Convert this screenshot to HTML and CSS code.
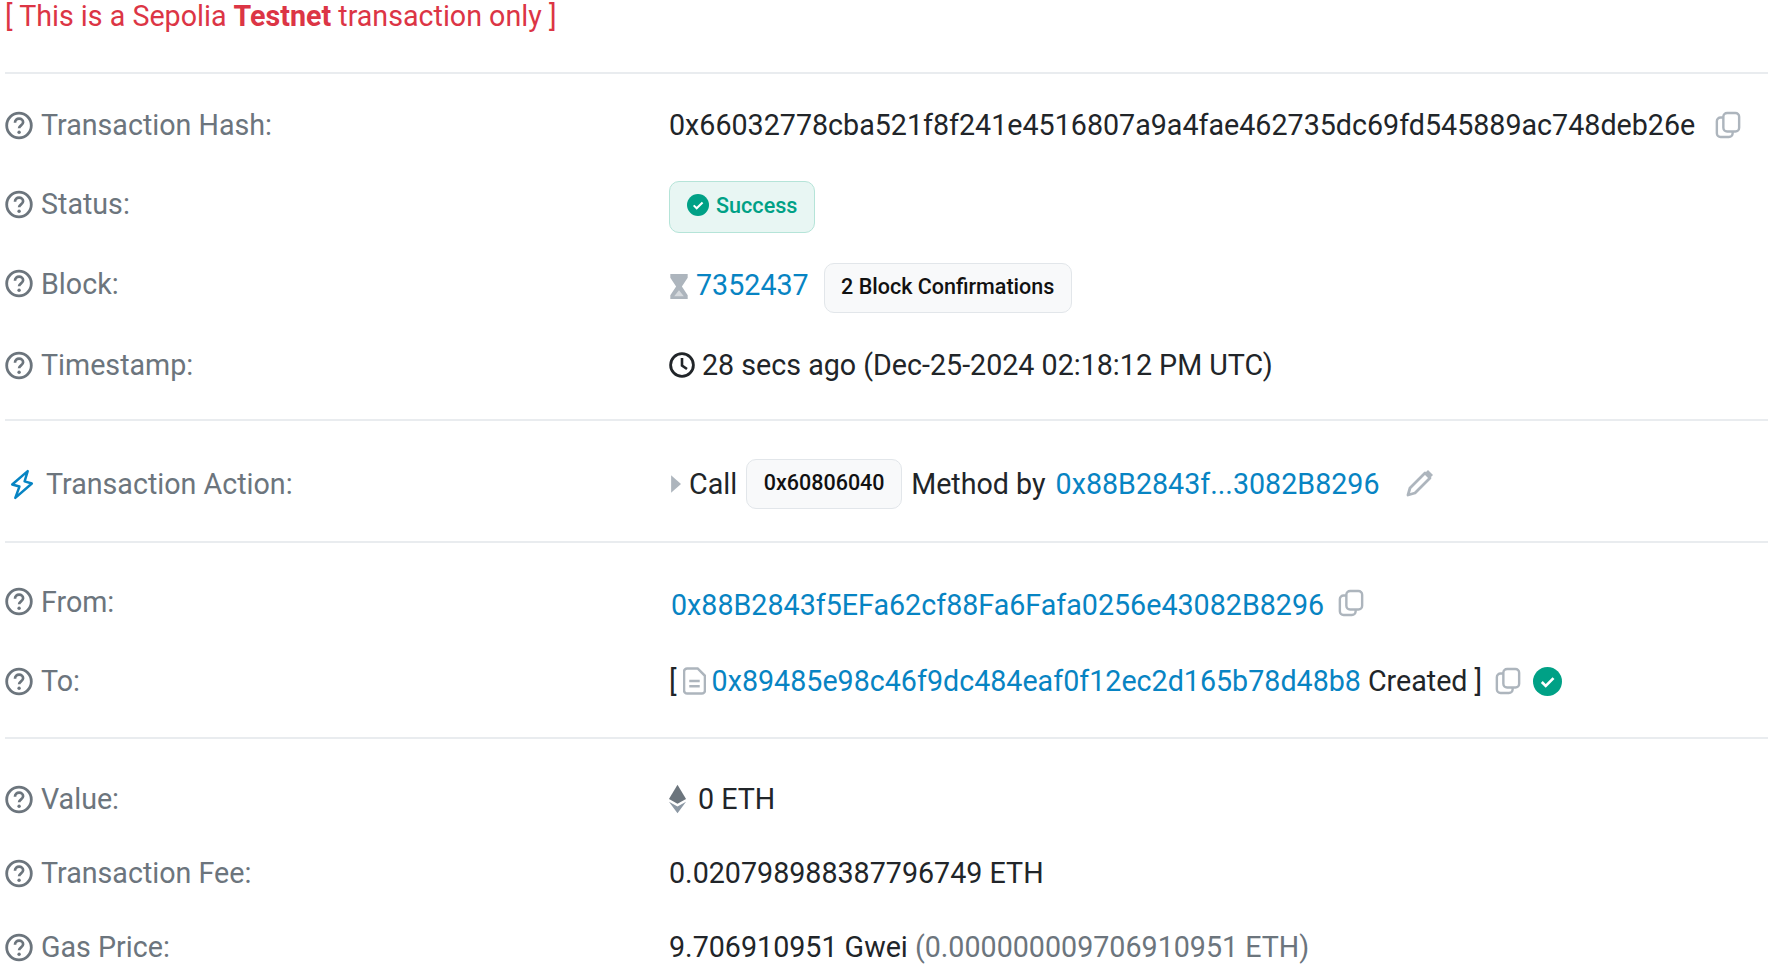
FILE: index.html
```html
<!DOCTYPE html>
<html lang="en">
<head>
<meta charset="utf-8">
<title>Sepolia Testnet transaction</title>
<link rel="stylesheet" href="styles.css">
</head>
<body>
<svg class="defs" width="0" height="0" aria-hidden="true">
  <symbol id="q" viewBox="0 0 28 28"><circle cx="14" cy="14" r="12.3" fill="none" stroke="currentColor" stroke-width="2.800"/><path d="M10 11.2c0-2.400 1.800-4 4.100-4s4 1.500 4 3.600c0 3.100-4 3.100-4 6" fill="none" stroke="currentColor" stroke-width="2.700"/><circle cx="14.100" cy="20.800" r="1.700" fill="currentColor"/></symbol>
  <symbol id="copy" viewBox="0 0 28 30"><rect x="9" y="2" width="17" height="20" rx="4" fill="none" stroke="currentColor" stroke-width="2.600"/><path d="M9 7H6a4 4 0 0 0-4 4v13a4 4 0 0 0 4 4h9a4 4 0 0 0 4-4v-2" fill="none" stroke="currentColor" stroke-width="2.600"/></symbol>
  <symbol id="check" viewBox="0 0 28 28"><circle cx="14" cy="14" r="14" fill="currentColor"/><path d="M8.500 14.500l3.800 3.700 7.500-7.500" fill="none" stroke="#fff" stroke-width="2.600"/></symbol>
</svg>

<main class="page">
  <p class="notice">[ This is a Sepolia <strong>Testnet</strong> transaction only ]</p>

  <section class="group group-a">
    <div class="row">
      <div class="label"><svg class="q"><use href="#q"/></svg>Transaction Hash:</div>
      <div class="value">0x66032778cba521f8f241e4516807a9a4fae462735dc69fd545889ac748deb26e<svg class="copy copy-hash"><use href="#copy"/></svg></div>
    </div>
    <div class="row">
      <div class="label label-status"><svg class="q"><use href="#q"/></svg>Status:</div>
      <div class="value"><span class="success"><svg class="check-sm"><use href="#check"/></svg>Success</span></div>
    </div>
    <div class="row">
      <div class="label label-up"><svg class="q"><use href="#q"/></svg>Block:</div>
      <div class="value">
        <svg class="glass" viewBox="0 0 20 28"><path d="M1 1h18v4l-6 9 6 9v4H1v-4l6-9-6-9z" fill="#adb5bd"/><path d="M5 24l5-6 5 6z" fill="#fff" opacity=".5"/></svg>
        <a class="link block-no">7352437</a>
        <span class="pill pill-confirm">2 Block Confirmations</span>
      </div>
    </div>
    <div class="row">
      <div class="label"><svg class="q"><use href="#q"/></svg>Timestamp:</div>
      <div class="value">
        <svg class="clock" viewBox="0 0 26 26"><circle cx="13" cy="13" r="11.400" fill="none" stroke="#212529" stroke-width="2.800"/><path d="M13 6v7.500l5 3.500" fill="none" stroke="#212529" stroke-width="2.600"/></svg>
        <span>28 secs ago (Dec-25-2024 02:18:12 PM UTC)</span>
      </div>
    </div>
  </section>

  <section class="group group-b">
    <div class="row">
      <div class="label label-action"><svg class="bolt" viewBox="0 0 24 30"><path d="M18 2L3 15l7 2-4 11 16-14-7-2z" fill="none" stroke="#0784c3" stroke-width="2.400" stroke-linejoin="round"/></svg>Transaction Action:</div>
      <div class="value">
        <svg class="caret" viewBox="0 0 10 16"><path d="M1 0l9 8-9 8z" fill="#adb5bd"/></svg>
        <span class="call">Call</span>
        <span class="pill pill-method">0x60806040</span>
        <span class="method">Method by</span>
        <a class="link">0x88B2843f...3082B8296</a>
        <svg class="pencil" viewBox="0 0 30 30"><path d="M3 27l2-7L20 5l5 5-15 15z" fill="none" stroke="#adb5bd" stroke-width="2.800" stroke-linejoin="round"/><path d="M20 5l3-3 5 5-3 3z" fill="#adb5bd"/></svg>
      </div>
    </div>
  </section>

  <section class="group group-c">
    <div class="row row-78">
      <div class="label label-up"><svg class="q"><use href="#q"/></svg>From:</div>
      <div class="value"><a class="link from">0x88B2843f5EFa62cf88Fa6Fafa0256e43082B8296</a><svg class="copy copy-from"><use href="#copy"/></svg></div>
    </div>
    <div class="row row-78">
      <div class="label"><svg class="q"><use href="#q"/></svg>To:</div>
      <div class="value">
        <span>[</span>
        <svg class="doc" viewBox="0 0 22 26"><path d="M4 1h10l7 7v14a3 3 0 0 1-3 3H4a3 3 0 0 1-3-3V4a3 3 0 0 1 3-3z" fill="none" stroke="#adb5bd" stroke-width="2.400"/><path d="M6 13h10M6 18h10" stroke="#adb5bd" stroke-width="2.200"/></svg>
        <a class="link to">0x89485e98c46f9dc484eaf0f12ec2d165b78d48b8</a>
        <span class="created">Created ]</span>
        <svg class="copy copy-to"><use href="#copy"/></svg>
        <svg class="check-lg"><use href="#check"/></svg>
      </div>
    </div>
  </section>

  <section class="group group-d">
    <div class="row row-74">
      <div class="label"><svg class="q"><use href="#q"/></svg>Value:</div>
      <div class="value">
        <svg class="eth" viewBox="0 0 20 30"><path d="M10 0L1 15l9 5 9-5z" fill="#6c757d"/><path d="M1 18l9 12 9-12-9 5z" fill="#8c98a4"/></svg>
        <span>0 ETH</span>
      </div>
    </div>
    <div class="row row-74">
      <div class="label"><svg class="q"><use href="#q"/></svg>Transaction Fee:</div>
      <div class="value">0.020798988387796749 ETH</div>
    </div>
    <div class="row row-74">
      <div class="label"><svg class="q"><use href="#q"/></svg>Gas Price:</div>
      <div class="value">9.706910951 Gwei <span class="muted">(0.000000009706910951 ETH)</span></div>
    </div>
  </section>
</main>
</body>
</html>
```

FILE: styles.css
```css
* { box-sizing: border-box; }
html, body { margin: 0; height: 969px; overflow: hidden; background: #fff; }
body { font-family: Roboto, "Liberation Sans", sans-serif; font-size: 28.65px; color: #212529; }
.defs { display: block; height: 0; }
.page { padding: 0 2px 0 5px; }
.notice { margin: 0; height: 72px; padding-top: 0; line-height: 33px; color: #dc3545; white-space: nowrap; }
.notice strong { font-weight: 700; }
.group { border-top: 2px solid #e9ecef; }
.group-a { padding: 11px 0 14px; }
.group-b { padding: 23px 0 17px; }
.group-c { padding: 21px 0 17px; }
.group-d { padding: 23px 0 0; }
.row { display: flex; align-items: center; height: 80px; }
.row-78 { height: 78px; }
.row-74 { height: 74px; }
.label { flex: 0 0 664px; display: flex; align-items: center; color: #6c757d; white-space: nowrap; }
.label-up { padding-bottom: 3px; }
.label-status { padding-bottom: 2px; }
.value { display: flex; align-items: center; white-space: pre; }
.q { width: 28px; height: 29px; margin-right: 8px; color: #6c757d; flex: none; }
.label-action { padding-left: 4px; }
.bolt { width: 25px; height: 31px; margin-right: 12px; flex: none; }
.link { color: #0784c3; }
.muted { color: #6c757d; }
.copy { width: 26px; height: 30px; color: #adb5bd; flex: none; }
.copy-hash { margin-left: 20px; }
.copy-from { margin-left: 14px; }
.copy-to { margin-left: 13px; }
.success { display: inline-flex; align-items: center; width: 146px; height: 52px; margin-top: 4px; padding: 0 0 3px 17px; border: 1.500px solid #b5e4d8; border-radius: 10px; background: #e8f6f3; color: #00a186; font-size: 21.6px; font-weight: 500; }
.check-sm { width: 22px; height: 22px; margin: -2px 7px 0 0; color: #00a186; }
.check-lg { width: 29px; height: 29px; margin-left: 12px; color: #00a186; }
.glass { width: 20px; height: 27px; margin-top: 2px; }
.block-no { margin-left: 7px; }
.pill { display: inline-flex; align-items: center; justify-content: center; height: 50px; border: 1.500px solid #e2e6ea; border-radius: 10px; background: #f8f9fa; font-size: 21.5px; font-weight: 500; color: #111; }
.pill-confirm { width: 248px; margin-left: 15px; margin-top: 6px; padding-bottom: 3px; }
.pill-method { width: 156px; margin: 0 9px 0 9px; padding-bottom: 3px; }
.clock { width: 26px; height: 26px; margin-right: 7px; }
.caret { width: 11px; height: 18px; margin-right: 8px; margin-left: 1px; }
.method { margin-right: 10px; }
.pencil { width: 30px; height: 30px; margin-left: 25px; margin-top: -2px; }
.from { margin: 3px 0 0 2px; }
.doc { width: 23px; height: 28px; margin: 0 6px 0 6px; }
.created { margin-left: 7px; }
.eth { width: 19px; height: 30px; margin: 0 11px 0 -1px; }
```
